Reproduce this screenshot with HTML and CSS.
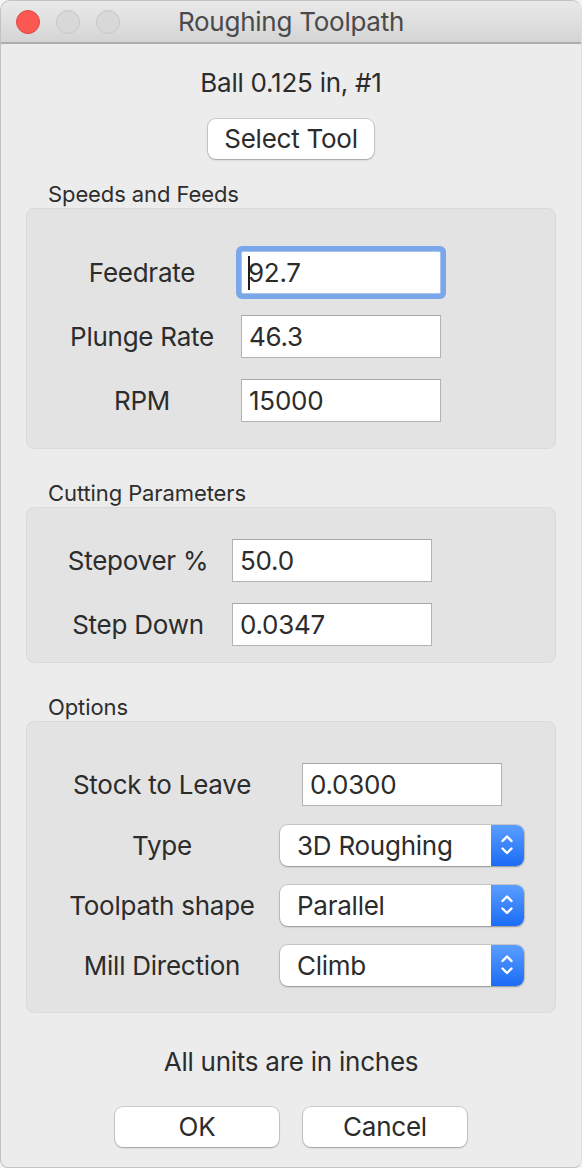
FILE: index.html
```html
<!DOCTYPE html>
<html>
<head>
<meta charset="utf-8">
<link rel="stylesheet" href="styles.css">
</head>
<body>
<div class="window">
  <div class="titlebar">
    <div class="lights">
      <span class="light close"></span>
      <span class="light"></span>
      <span class="light"></span>
    </div>
    <div class="title">Roughing Toolpath</div>
    <div></div>
  </div>
  <div class="content">
    <div class="tool-name">Ball 0.125 in, #1</div>
    <div class="center-row"><div class="btn btn-select">Select Tool</div></div>

    <div class="group-label">Speeds and Feeds</div>
    <div class="group g-speeds">
      <div class="lbl">Feedrate</div>
      <div class="field focused"><span class="caret"></span>92.7</div>
      <div class="lbl">Plunge Rate</div>
      <div class="field">46.3</div>
      <div class="lbl">RPM</div>
      <div class="field">15000</div>
    </div>

    <div class="group-label">Cutting Parameters</div>
    <div class="group g-cutting">
      <div class="lbl">Stepover %</div>
      <div class="field">50.0</div>
      <div class="lbl">Step Down</div>
      <div class="field">0.0347</div>
    </div>

    <div class="group-label">Options</div>
    <div class="group g-options">
      <div class="lbl">Stock to Leave</div>
      <div class="field">0.0300</div>
      <div class="lbl">Type</div>
      <div class="popup"><span class="popup-text">3D Roughing</span><span class="popup-arrows"><svg width="33" height="41" viewBox="0 0 33 41"><polyline points="11.5,16 16,11.5 20.5,16" fill="none" stroke="#fff" stroke-width="2.4" stroke-linecap="round" stroke-linejoin="round"/><polyline points="11.5,23.5 16,28 20.5,23.5" fill="none" stroke="#fff" stroke-width="2.4" stroke-linecap="round" stroke-linejoin="round"/></svg></span></div>
      <div class="lbl">Toolpath shape</div>
      <div class="popup"><span class="popup-text">Parallel</span><span class="popup-arrows"><svg width="33" height="41" viewBox="0 0 33 41"><polyline points="11.5,16 16,11.5 20.5,16" fill="none" stroke="#fff" stroke-width="2.4" stroke-linecap="round" stroke-linejoin="round"/><polyline points="11.5,23.5 16,28 20.5,23.5" fill="none" stroke="#fff" stroke-width="2.4" stroke-linecap="round" stroke-linejoin="round"/></svg></span></div>
      <div class="lbl">Mill Direction</div>
      <div class="popup"><span class="popup-text">Climb</span><span class="popup-arrows"><svg width="33" height="41" viewBox="0 0 33 41"><polyline points="11.5,16 16,11.5 20.5,16" fill="none" stroke="#fff" stroke-width="2.4" stroke-linecap="round" stroke-linejoin="round"/><polyline points="11.5,23.5 16,28 20.5,23.5" fill="none" stroke="#fff" stroke-width="2.4" stroke-linecap="round" stroke-linejoin="round"/></svg></span></div>
    </div>

    <div class="units">All units are in inches</div>
    <div class="actions">
      <div class="btn btn-action">OK</div>
      <div class="btn btn-action">Cancel</div>
    </div>
  </div>
</div>
</body>
</html>
```

FILE: styles.css
```css
html, body {
  margin: 0;
  padding: 0;
  background: #f4f4f4;
}

body {
  font-family: Inter, "Liberation Sans", sans-serif;
  font-size: 26px;
  color: #2c2c2c;
  letter-spacing: -0.25px;
}

.window {
  width: 582px;
  height: 1168px;
  box-sizing: border-box;
  border: 1px solid #c2c2c2;
  border-right-color: #dedede;
  border-radius: 10px 10px 8px 8px;
  background: #ececec;
  overflow: hidden;
}

.titlebar {
  height: 41px;
  border-bottom: 2px solid #adadad;
  background: linear-gradient(#e9e9e9, #d5d5d5);
  display: grid;
  grid-template-columns: 1fr auto 1fr;
  align-items: center;
}

.lights {
  display: flex;
  gap: 16px;
  padding-left: 15px;
}

.light {
  width: 24px;
  height: 24px;
  box-sizing: border-box;
  border-radius: 50%;
  background: #d8d8d8;
  border: 1px solid #c6c6c6;
}

.light.close {
  background: #fc5852;
  border-color: #e14842;
}

.title {
  color: #4a4a4a;
  font-size: 26px;
  line-height: 32px;
}

.content {
  padding: 0 25px;
  display: flex;
  flex-direction: column;
}

.tool-name {
  margin-top: 23px;
  line-height: 32px;
  text-align: center;
}

.center-row {
  display: flex;
  justify-content: center;
  margin-top: 20px;
}

.btn {
  box-sizing: border-box;
  height: 40px;
  background: #ffffff;
  border-radius: 8px;
  box-shadow: 0 0 0 1px rgba(0, 0, 0, 0.13), 0 1px 2px rgba(0, 0, 0, 0.22);
  display: flex;
  align-items: center;
  justify-content: center;
  line-height: 40px;
  color: #2c2c2c;
}

.btn-select {
  width: 166px;
}

.group-label {
  font-size: 22px;
  line-height: 28px;
  padding-left: 22px;
  margin-top: 30px;
  color: #2e2e2e;
  letter-spacing: -0.1px;
}

.center-row + .group-label {
  margin-top: 21px;
}

.group {
  background: #e3e3e3;
  border: 1px solid #dadada;
  border-radius: 8px;
  display: grid;
  align-items: center;
  padding-left: 25px;
}

.g-speeds {
  grid-template-columns: 180px 200px;
  column-gap: 9px;
  row-gap: 21px;
  padding-top: 42px;
  padding-bottom: 26px;
}

.g-cutting {
  grid-template-columns: 172px 200px;
  column-gap: 8px;
  row-gap: 21px;
  padding-top: 31px;
  padding-bottom: 16px;
}

.g-options {
  grid-template-columns: 220px 260px;
  column-gap: 0;
  row-gap: 19px;
  padding-top: 41px;
  padding-bottom: 26px;
  justify-items: center;
}

.lbl {
  text-align: center;
  line-height: 32px;
  justify-self: center;
}

.field {
  box-sizing: border-box;
  width: 200px;
  height: 43px;
  background: #ffffff;
  border: 1px solid #b3b3b3;
  border-top-color: #a9a9a9;
  padding-left: 7px;
  line-height: 41px;
  color: #2c2c2c;
  white-space: nowrap;
}

.field.focused {
  border-color: #a7c3ee;
  border-radius: 2px;
  box-shadow: 0 0 0 5px #7aa6ea;
}

.caret {
  display: inline-block;
  width: 2px;
  height: 34px;
  background: #1e1e1e;
  vertical-align: middle;
  margin-right: -2px;
  margin-left: -1px;
  position: relative;
  top: -2px;
}

.popup {
  box-sizing: border-box;
  width: 244px;
  height: 41px;
  background: #ffffff;
  border-radius: 8px;
  box-shadow: 0 0 0 1px rgba(0, 0, 0, 0.12), 0 1px 2px rgba(0, 0, 0, 0.25);
  display: flex;
  align-items: center;
}

.popup-text {
  flex: 1;
  padding-left: 17px;
  line-height: 41px;
  color: #2c2c2c;
}

.popup-arrows {
  width: 33px;
  height: 41px;
  border-radius: 0 8px 8px 0;
  background: linear-gradient(#5a9eff, #1b6cf6);
  display: flex;
}

.units {
  margin-top: 33px;
  line-height: 32px;
  text-align: center;
}

.actions {
  display: flex;
  justify-content: center;
  gap: 24px;
  margin-top: 29px;
}

.btn-action {
  width: 164px;
}
```
